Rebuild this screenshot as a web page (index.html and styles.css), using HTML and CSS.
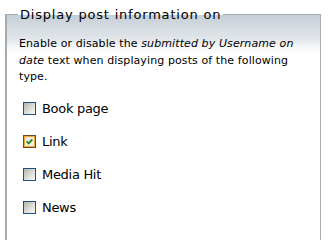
FILE: index.html
```html
<!DOCTYPE html>
<html>
<head>
<meta charset="utf-8">
<link rel="stylesheet" href="styles.css">
</head>
<body>
<fieldset class="panel">
  <legend class="panel-title">Display post information on</legend>
  <p class="desc">Enable or disable the <em>submitted by Username on date</em> text when displaying posts of the following type.</p>
  <div class="options">
    <label class="opt"><span class="box"></span>Book page</label>
    <label class="opt"><span class="box checked"><svg viewBox="0 0 7 7" width="7" height="7"><path d="M0.6 3.4 L2.6 5.4 L6.4 1.4" fill="none" stroke="#1e8a1e" stroke-width="1.8"/></svg></span>Link</label>
    <label class="opt"><span class="box"></span>Media Hit</label>
    <label class="opt"><span class="box"></span>News</label>
  </div>
</fieldset>
</body>
</html>
```
FILE: styles.css
```css
html, body { margin: 0; padding: 0; background: #fff; }
body { font-family: "DejaVu Sans", Verdana, sans-serif; color: #000; }
.panel {
  margin: 7px 0 0 5px;
  width: 316px;
  box-sizing: border-box;
  border: 1px solid #a3abb3;
  border-width: 1px 1px 0 2px;
  padding: 0 10px 20px 12px;
  background: linear-gradient(to bottom, #c6ced6 0px, #e2e6ea 24px, #f6f7f8 32px, #ffffff 38px, #ffffff 100%);
  height: 240px;
}
.panel-title {
  font-size: 13px;
  letter-spacing: 0.8px;
  padding: 0 2px;
  margin-left: -1px;
  color: #000;
  line-height: 15px;
}
.desc {
  font-size: 11px;
  letter-spacing: 0.1px;
  line-height: 16.5px;
  margin: 14px 0 0 0;
}
.desc em { font-style: italic; }
.options { display: flex; flex-direction: column; margin-top: 6px; }
.opt {
  display: flex;
  align-items: center;
  gap: 6px;
  height: 33px;
  font-size: 13px;
  letter-spacing: -0.3px;
  padding-left: 4px;
}
.box {
  width: 11px; height: 11px;
  border: 1px solid #1c5180;
  background: linear-gradient(135deg, #b4b4ac 0%, #e2e2dc 60%, #fafaf8 100%);
  display: flex; align-items: center; justify-content: center;
}
.box.checked {
  background: linear-gradient(135deg, #e8e6d8, #f8f6ee);
  box-shadow: inset 0 0 0 1px #f0a830;
  border-color: #6a4a2a;
}
```
